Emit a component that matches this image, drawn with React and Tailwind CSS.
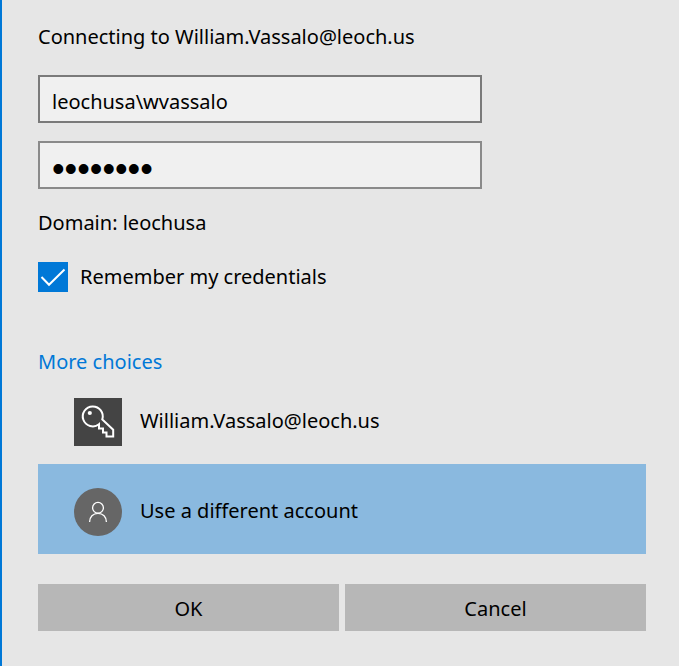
import { useState } from "react";

const ACCOUNTS = [
  { id: "saved", label: "William.Vassalo@leoch.us", icon: KeyTile },
  { id: "other", label: "Use a different account", icon: PersonTile },
];

function KeyTile() {
  return (
    <span className="h-12 w-12 shrink-0 bg-[#444444]">
      <svg viewBox="0 0 48 48" className="h-12 w-12" fill="none" stroke="#fff" strokeWidth="2">
        <path d="M28.3 21.4A10 10 0 1 0 25 26.2V30.5H29V34.5H32.5V38.5H39.2V31.8Z" />
        <circle cx="15.8" cy="15" r="2.1" fill="#fff" stroke="none" />
      </svg>
    </span>
  );
}

function PersonTile() {
  return (
    <span className="h-12 w-12 shrink-0 rounded-full bg-[#666666]">
      <svg viewBox="0 0 48 48" className="h-12 w-12" fill="none" stroke="#fff" strokeWidth="1.3">
        <circle cx="24" cy="19.8" r="5.4" />
        <path d="M15.6 34C15.6 29 19 25.4 24 25.4S32.4 29 32.4 34" />
      </svg>
    </span>
  );
}

export default function App() {
  const [username, setUsername] = useState("leochusa\\wvassalo");
  const [password, setPassword] = useState("password");
  const [remember, setRemember] = useState(true);
  const [selected, setSelected] = useState("other");

  return (
    <main className="min-h-screen border-l-2 border-[#0078d7] bg-[#e6e6e6] pt-[23px] pr-[33px] pb-8 pl-9 font-['Noto_Sans',sans-serif] text-xl leading-7 text-black">
      <form onSubmit={(e) => e.preventDefault()}>
        <p>Connecting to William.Vassalo@leoch.us</p>

        <div className="mt-6 flex max-w-[444px] flex-col gap-[18px]">
          <input
            type="text"
            aria-label="User name"
            value={username}
            onChange={(e) => setUsername(e.target.value)}
            className="h-12 w-full border-2 border-[#7a7a7a] bg-[#f0f0f0] px-3 pt-1 outline-none"
          />
          <input
            type="password"
            aria-label="Password"
            value={password}
            onChange={(e) => setPassword(e.target.value)}
            className="h-12 w-full border-2 border-[#8a8a8a] bg-[#f0f0f0] px-3 pt-2 font-['Liberation_Sans',sans-serif] text-4xl outline-none"
          />
        </div>

        <p className="mt-5">Domain: leochusa</p>

        <label className="mt-[25px] flex w-fit items-center gap-3">
          <span className="grid h-[30px] w-[30px]">
            <input
              type="checkbox"
              checked={remember}
              onChange={(e) => setRemember(e.target.checked)}
              className="peer col-start-1 row-start-1 h-[30px] w-[30px] appearance-none border-2 border-[#0078d7] checked:bg-[#0078d7]"
            />
            <svg
              viewBox="0 0 30 30"
              className="pointer-events-none invisible col-start-1 row-start-1 peer-checked:visible"
              fill="none"
              stroke="#fff"
              strokeWidth="2"
            >
              <path d="M3.5 15L11 22.8L26.5 7.5" />
            </svg>
          </span>
          Remember my credentials
        </label>

        <a href="#choices" className="mt-[58px] block w-fit leading-6 text-[#0078d7]">
          More choices
        </a>

        <div id="choices" className="flex flex-col">
          {ACCOUNTS.map(({ id, label, icon: Icon }) => (
            <button
              key={id}
              type="button"
              aria-pressed={selected === id}
              onClick={() => setSelected(id)}
              className={`flex h-[90px] items-center gap-[18px] pt-[6px] pl-9 text-left ${
                selected === id ? "bg-[#8ab9df]" : ""
              }`}
            >
              <Icon />
              <span className="pb-0.5">{label}</span>
            </button>
          ))}
        </div>

        <div className="mt-[30px] grid grid-cols-2 gap-[6px]">
          <button type="submit" className="h-[47px] bg-[#b7b7b7] pt-0.5">
            OK
          </button>
          <button type="button" className="h-[47px] bg-[#b7b7b7] pt-0.5">
            Cancel
          </button>
        </div>
      </form>
    </main>
  );
}
